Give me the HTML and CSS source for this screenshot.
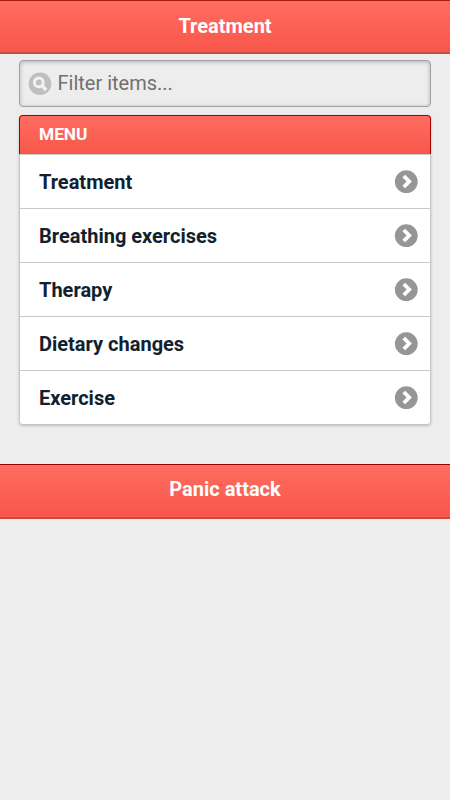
FILE: index.html
```
<!DOCTYPE html>
<html lang="en">
<head>
    <meta charset="UTF-8">
    <meta name="viewport" content="width=device-width, initial-scale=1.0">
    <title>Treatment</title>
    <link rel="stylesheet" href="styles.css">
</head>
<body>
    <svg class="sprite" aria-hidden="true">
        <symbol id="arrow" viewBox="0 0 24 24">
            <circle cx="12.3" cy="11.7" r="11.4" fill="#969696"/>
            <path d="M9.8 6l5.4 5.5-5.4 5.5" fill="none" stroke="#fff" stroke-width="3.9"/>
        </symbol>
    </svg>

    <header class="bar header">
        <h1>Treatment</h1>
    </header>

    <main class="content">
        <form class="search">
            <svg class="icon" viewBox="0 0 24 24">
                <circle cx="12" cy="11.7" r="11.3" fill="#bfbfbf"/>
                <circle cx="10.8" cy="10.4" r="4.4" fill="none" stroke="#f2f2f2" stroke-width="3"/>
                <path d="M14 13.8l4.2 4.2" stroke="#f2f2f2" stroke-width="3.4"/>
            </svg>
            <input type="text" placeholder="Filter items...">
        </form>

        <ul class="menu">
            <li class="divider">MENU</li>
            <li><a href="#">Treatment <svg class="icon"><use href="#arrow"/></svg></a></li>
            <li><a href="#">Breathing exercises <svg class="icon"><use href="#arrow"/></svg></a></li>
            <li><a href="#">Therapy <svg class="icon"><use href="#arrow"/></svg></a></li>
            <li><a href="#">Dietary changes <svg class="icon"><use href="#arrow"/></svg></a></li>
            <li><a href="#">Exercise <svg class="icon"><use href="#arrow"/></svg></a></li>
        </ul>
    </main>

    <footer class="bar footer">
        <h1>Panic attack</h1>
    </footer>
</body>
</html>
```

FILE: styles.css
```
* {
    box-sizing: border-box;
}
body {
    margin: 0;
    background-color: #ededed;
    font-family: Roboto, Arial, sans-serif;
    font-size: 20px;
}
.sprite {
    display: none;
}
.bar {
    display: flex;
    align-items: center;
    justify-content: center;
    background: linear-gradient(#ff6c60, #f8574a);
    color: #fff;
}
.bar h1 {
    margin: 0;
    font-size: 20px;
    line-height: 24px;
    font-weight: 700;
}
.header {
    height: 54px;
    padding-bottom: 2px;
    border-top: 1px solid #a51c14;
    border-bottom: 2px solid #c94c40;
}
.footer {
    height: 55px;
    margin-top: 39px;
    padding-bottom: 5px;
    border-top: 1px solid #980000;
    border-bottom: 2px solid #c94c40;
}
.content {
    padding: 6px 19px 0;
}
.search {
    display: flex;
    align-items: center;
    height: 47px;
    padding: 0 8px;
    border: 1px solid #a0a0a0;
    border-radius: 4px;
    box-shadow: inset 0 1px 4px rgba(0,0,0,0.25);
}
.search input {
    flex: 1;
    min-width: 0;
    margin-left: 5.5px;
    padding: 0 0 1px;
    border: none;
    outline: none;
    background: none;
    font: 20px Roboto, Arial, sans-serif;
}
.search input::placeholder {
    color: #707070;
}
.icon {
    width: 24px;
    height: 24px;
    flex: none;
}
.menu {
    list-style: none;
    margin: 8px 0 0;
    padding: 0;
    border-radius: 4px;
    box-shadow: 0 1px 3px rgba(0,0,0,0.2);
}
.divider {
    height: 38.6px;
    padding: 0 19px;
    border: 1px solid #a30000;
    border-bottom: none;
    border-radius: 4px 4px 0 0;
    background: linear-gradient(#ff6c60, #f8574a);
    color: #fff;
    font-size: 17.3px;
    line-height: 36px;
    font-weight: 700;
}
.menu a {
    display: flex;
    align-items: center;
    justify-content: space-between;
    height: 54.2px;
    padding: 1px 12px 0 19px;
    border: 1px solid #c8c8c8;
    border-bottom: none;
    background-color: #fff;
    color: #11222e;
    font-weight: 700;
    text-decoration: none;
}
.menu li:last-child a {
    height: 55px;
    border-bottom: 1px solid #c4c4c4;
    border-radius: 0 0 4px 4px;
}
```
